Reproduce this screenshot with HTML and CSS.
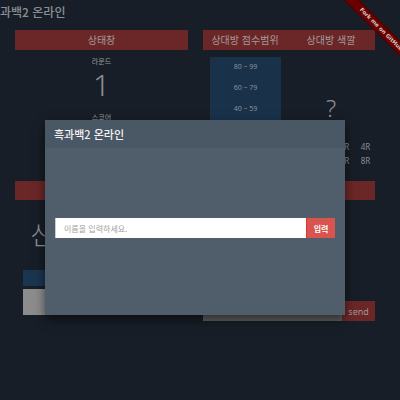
FILE: index.html
```html
<!DOCTYPE html>
<html lang="ko">
<head>
<meta charset="utf-8">
<title>흑과백2 온라인</title>
<link rel="stylesheet" href="styles.css">
</head>
<body>
<div class="page">
  <h1 class="title">흑과백2 온라인</h1>
  <div class="top">
    <section class="status">
      <div class="head">상태창</div>
      <div class="label first">라운드</div>
      <div class="round-num">1</div>
      <div class="label">스코어</div>
    </section>
    <section class="opp">
      <div class="head split"><span>상대방 점수범위</span><span>상대방 색깔</span></div>
      <div class="opp-body">
        <div class="ranges">
          <div>80 ~ 99</div>
          <div>60 ~ 79</div>
          <div>40 ~ 59</div>
          <div>20 ~ 39</div>
          <div>0 ~ 19</div>
        </div>
        <div class="color-col">
          <div class="qmark">?</div>
          <div class="rounds">
            <span>1R</span><span>2R</span><span>3R</span><span>4R</span>
            <span>5R</span><span>6R</span><span>7R</span><span>8R</span>
          </div>
        </div>
      </div>
    </section>
  </div>
  <div class="bar"></div>
  <div class="bottom">
    <section class="left">
      <div class="big">신</div>
      <div class="blue-bar"></div>
      <div class="log-row"><div class="log"></div><div class="mini-btn"></div></div>
    </section>
    <section class="right">
      <div class="chat"><div class="chat-input"></div><button class="send">send</button></div>
    </section>
  </div>
</div>

<a class="ribbon">Fork me on GitHub</a>

<div class="modal">
  <div class="modal-head">흑과백2 온라인</div>
  <div class="modal-body">
    <div class="name-row">
      <input class="name-input" type="text" placeholder="이름을 입력하세요.">
      <button class="name-btn">입력</button>
    </div>
  </div>
</div>
</body>
</html>
```
FILE: styles.css
```css
* { box-sizing: border-box; }
html, body { margin: 0; padding: 0; }
body {
  background: #171e27;
  font-family: "Noto Sans CJK KR", "Noto Sans", sans-serif;
  color: #8f9398;
  width: 400px;
  height: 400px;
  overflow: hidden;
  position: relative;
}
.page { width: 400px; }
.title {
  margin: 0 0 0 -11px;
  height: 30px;
  line-height: 24px;
  font-size: 12px;
  font-weight: 500;
  color: #8a8e93;
  white-space: nowrap;
}
.top {
  display: grid;
  grid-template-columns: 173px 172px;
  column-gap: 15px;
  margin-left: 15px;
  height: 151px;
}
.head {
  height: 20px;
  line-height: 20px;
  background: #6b2727;
  color: #a39a9a;
  font-size: 10px;
  text-align: center;
}
.head.split { display: grid; grid-template-columns: 84px 88px; }
.status { text-align: center; }
.label { font-size: 7px; color: #9a9ea2; line-height: 10px; }
.label.first { margin-top: 6px; }
.round-num {
  margin-top: 4px;
  font-size: 30px;
  font-weight: 300;
  line-height: 30px;
  color: #8a8e93;
  margin-bottom: 12px;
  font-family: "Noto Sans", sans-serif;
}
.opp-body {
  display: grid;
  grid-template-columns: 84px 88px;
}
.ranges {
  margin: 7px 6px 0 7px;
  background: #19324a;
  height: 120px;
  font-size: 7px;
  color: #8b9099;
  text-align: center;
  padding-top: 5px;
  display: flex;
  flex-direction: column;
  gap: 11px;
  font-family: "Noto Sans", sans-serif;
}
.ranges div { line-height: 10px; }
.color-col { text-align: center; }
.qmark {
  margin-top: 44px;
  font-size: 24px;
  line-height: 28px;
  color: #8a8e93;
  font-family: "Noto Sans", sans-serif;
  font-weight: 300;
}
.rounds {
  margin-top: 20px;
  display: grid;
  grid-template-columns: repeat(4, 21px);
  justify-content: center;
  row-gap: 4px;
  font-size: 8px;
  line-height: 10px;
  color: #8a8e93;
  font-family: "Noto Sans", sans-serif;
  padding-left: 6px;
}
.bar {
  margin-left: 15px;
  width: 360px;
  height: 19px;
  background: #6b2727;
}
.bottom {
  display: grid;
  grid-template-columns: 165px 172px;
  column-gap: 15px;
  margin-left: 23px;
}
.big {
  font-size: 26px;
  line-height: 30px;
  margin: 19px 0 0 7px;
  color: #8f9296;
  font-weight: 300;
}
.blue-bar {
  margin-top: 21px;
  height: 16px;
  background: #1a3550;
}
.log-row { display: flex; margin-top: 3px; align-items: flex-end; }
.log { width: 110px; height: 26px; background: #8c8c8c; }
.mini-btn { margin-left: 6px; width: 41px; height: 21px; background: #6b1e1e; }
.right { padding-top: 101px; }
.chat { display: flex; height: 20px; }
.chat-input { width: 140px; background: #5e5e5e; }
.send {
  width: 33px;
  border: 0;
  padding: 0;
  background: #6b2727;
  color: #a39696;
  font-family: "Noto Sans", sans-serif;
  font-size: 9px;
}
.ribbon {
  position: absolute;
  top: 24px;
  right: -31px;
  width: 100px;
  transform: rotate(45deg);
  background: #6a0000;
  color: #d4caca;
  font-size: 5.5px;
  font-weight: bold;
  line-height: 11px;
  text-align: center;
  font-family: "DejaVu Sans", sans-serif;
  white-space: nowrap;
  box-shadow: 0 0 0 1px #4a0000 inset;
}
.modal {
  position: absolute;
  left: 45px;
  top: 120px;
  width: 300px;
  height: 195px;
  background: #505e6c;
  box-shadow: 0 4px 10px rgba(0,0,0,0.55);
  display: flex;
  flex-direction: column;
}
.modal-head {
  height: 28px;
  line-height: 28px;
  padding-left: 9px;
  background: #4a5765;
  color: #f2f2f2;
  font-size: 11px;
  font-weight: 500;
}
.modal-body { padding: 70px 10px 0 10px; }
.name-row { display: flex; height: 20px; }
.name-input {
  width: 251px;
  height: 20px;
  border: 0;
  padding: 0 0 0 8px;
  background: #fff;
  font-family: "Noto Sans CJK KR", sans-serif;
  font-size: 8px;
  outline: none;
  border-left: 1px solid #ccc;
}
.name-input::placeholder { color: #a0a0a0; }
.name-btn {
  width: 29px;
  height: 20px;
  border: 0;
  border-left: 1px solid #e0302a;
  padding: 0;
  background: #d9534f;
  color: #fff;
  font-family: "Noto Sans CJK KR", sans-serif;
  font-size: 8px;
  font-weight: bold;
}
```
